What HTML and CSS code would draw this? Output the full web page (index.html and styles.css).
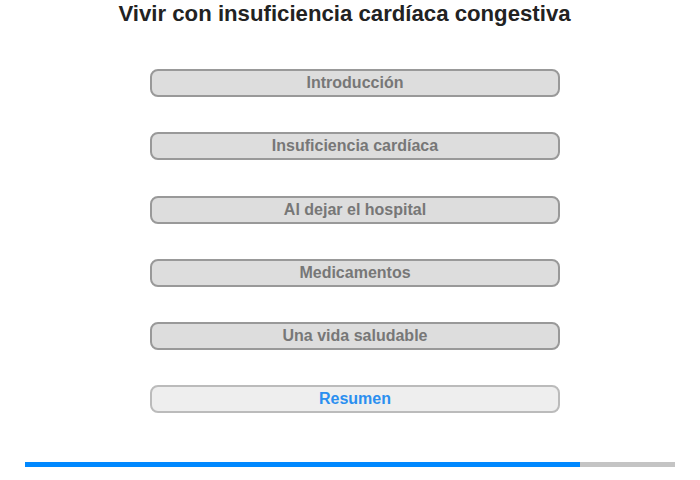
FILE: index.html
```html
<!DOCTYPE html>
<html lang="es">
<head>
<meta charset="utf-8">
<link rel="stylesheet" href="styles.css">
</head>
<body>
<div class="page">
  <h1 class="title">Vivir con insuficiencia cardíaca congestiva</h1>
  <nav class="menu">
    <div class="item">Introducción</div>
    <div class="item">Insuficiencia cardíaca</div>
    <div class="item">Al dejar el hospital</div>
    <div class="item">Medicamentos</div>
    <div class="item">Una vida saludable</div>
    <div class="item current">Resumen</div>
  </nav>
  <div class="progress"><div class="fill" style="width: 555px"></div></div>
</div>
</body>
</html>
```
FILE: styles.css
```css
* { box-sizing: border-box; }
html, body { margin: 0; padding: 0; background: #fff; }
body { font-family: "Liberation Sans", Arial, sans-serif; }
.page { width: 700px; height: 480px; display: flex; flex-direction: column; }
.title {
  margin: 0; padding-top: 2px; height: 30px;
  font-size: 22.2px; font-weight: bold; color: #222;
  text-align: center; line-height: 24px; padding-right: 11px;
}
.menu {
  display: flex; flex-direction: column; gap: 35.25px;
  padding-top: 39px; padding-left: 150px;
}
.item {
  width: 410px; height: 28px;
  border: 2px solid #999; border-radius: 8px;
  background: #ddd; color: #777;
  font-size: 16px; font-weight: bold;
  display: flex; align-items: center; justify-content: center;
}
.item.current { background: #eee; border-color: #bbb; color: #2b8ff0; }
.progress {
  margin: 49px 0 0 25px; width: 650px; height: 5px; background: #c4c4c4;
}
.fill { height: 100%; background: #0088ff; }
```
